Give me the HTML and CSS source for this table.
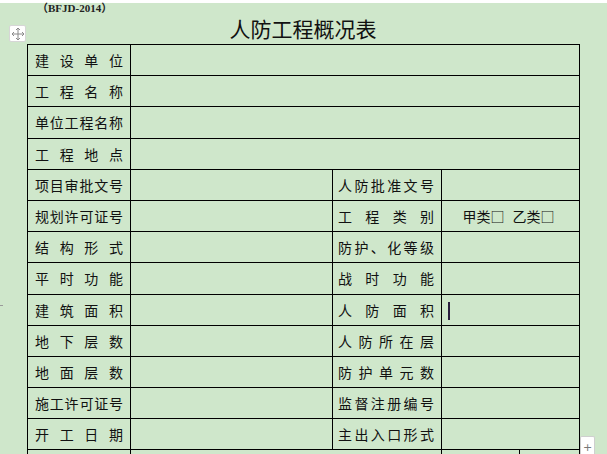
FILE: index.html
```html
<!DOCTYPE html>
<html lang="zh-CN">
<head>
<meta charset="utf-8">
<title>人防工程概况表</title>
<link rel="stylesheet" href="styles.css">
</head>
<body>
<div class="topstrip"></div>
<div class="code">（BFJD-2014）</div>
<div class="sheet">
  <h1 class="title">人防工程概况表</h1>
  <table class="form">
    <colgroup>
      <col class="c1"><col class="c2"><col class="c3"><col class="c4"><col class="c5">
    </colgroup>
    <tr><td class="lbl"><div class="dist"><span>建</span><span>设</span><span>单</span><span>位</span></div></td><td colspan="4"></td></tr>
    <tr><td class="lbl"><div class="dist"><span>工</span><span>程</span><span>名</span><span>称</span></div></td><td colspan="4"></td></tr>
    <tr><td class="lbl"><div class="dist"><span>单</span><span>位</span><span>工</span><span>程</span><span>名</span><span>称</span></div></td><td colspan="4"></td></tr>
    <tr><td class="lbl"><div class="dist"><span>工</span><span>程</span><span>地</span><span>点</span></div></td><td colspan="4"></td></tr>
    <tr><td class="lbl"><div class="dist"><span>项</span><span>目</span><span>审</span><span>批</span><span>文</span><span>号</span></div></td><td></td>
        <td class="lbl2"><div class="dist"><span>人</span><span>防</span><span>批</span><span>准</span><span>文</span><span>号</span></div></td><td colspan="2"></td></tr>
    <tr><td class="lbl"><div class="dist"><span>规</span><span>划</span><span>许</span><span>可</span><span>证</span><span>号</span></div></td><td></td>
        <td class="lbl2"><div class="dist"><span>工</span><span>程</span><span>类</span><span>别</span></div></td><td colspan="2" class="choice"><span>甲类□</span><span class="gap"></span><span>乙类□</span></td></tr>
    <tr><td class="lbl"><div class="dist"><span>结</span><span>构</span><span>形</span><span>式</span></div></td><td></td>
        <td class="lbl2"><div class="dist"><span>防</span><span>护</span><span>、</span><span>化</span><span>等</span><span>级</span></div></td><td colspan="2"></td></tr>
    <tr><td class="lbl"><div class="dist"><span>平</span><span>时</span><span>功</span><span>能</span></div></td><td></td>
        <td class="lbl2"><div class="dist"><span>战</span><span>时</span><span>功</span><span>能</span></div></td><td colspan="2"></td></tr>
    <tr><td class="lbl"><div class="dist"><span>建</span><span>筑</span><span>面</span><span>积</span></div></td><td></td>
        <td class="lbl2"><div class="dist"><span>人</span><span>防</span><span>面</span><span>积</span></div></td><td colspan="2" class="editing"><span class="caret"></span></td></tr>
    <tr><td class="lbl"><div class="dist"><span>地</span><span>下</span><span>层</span><span>数</span></div></td><td></td>
        <td class="lbl2"><div class="dist"><span>人</span><span>防</span><span>所</span><span>在</span><span>层</span></div></td><td colspan="2"></td></tr>
    <tr><td class="lbl"><div class="dist"><span>地</span><span>面</span><span>层</span><span>数</span></div></td><td></td>
        <td class="lbl2"><div class="dist"><span>防</span><span>护</span><span>单</span><span>元</span><span>数</span></div></td><td colspan="2"></td></tr>
    <tr><td class="lbl"><div class="dist"><span>施</span><span>工</span><span>许</span><span>可</span><span>证</span><span>号</span></div></td><td></td>
        <td class="lbl2"><div class="dist"><span>监</span><span>督</span><span>注</span><span>册</span><span>编</span><span>号</span></div></td><td colspan="2"></td></tr>
    <tr><td class="lbl"><div class="dist"><span>开</span><span>工</span><span>日</span><span>期</span></div></td><td></td>
        <td class="lbl2"><div class="dist"><span>主</span><span>出</span><span>入</span><span>口</span><span>形</span><span>式</span></div></td><td colspan="2"></td></tr>
    <tr><td></td><td colspan="2"></td><td></td><td></td></tr>
  </table>
</div>
<div class="move-handle">
  <svg width="14" height="14" viewBox="0 0 14 14" fill="none" stroke="#8a8a8a" stroke-width="1">
    <path d="M7 1v12M1 7h12"/>
    <path d="M5 3l2-2 2 2M5 11l2 2 2-2M3 5l-2 2 2 2M11 5l2 2-2 2"/>
  </svg>
</div>
<div class="add-handle">+</div>
<div class="left-tick"></div>
</body>
</html>
```
FILE: styles.css
```css
html, body {
  margin: 0;
  padding: 0;
}
body {
  width: 607px;
  height: 454px;
  overflow: hidden;
  background: #cfe7cb;
  font-family: "Noto Sans CJK SC", "Noto Sans", sans-serif;
  color: #111;
  position: relative;
}
.topstrip {
  height: 3px;
  background: #ffffff;
}
.code {
  height: 10px;
  line-height: 10px;
  padding-left: 37px;
  font-family: "Liberation Serif", "Noto Sans CJK SC", serif;
  font-weight: bold;
  font-size: 11px;
  color: #222;
}
.sheet {
  margin-left: 27px;
  width: 552px;
}
.title {
  margin: 0;
  height: 31px;
  line-height: 31px;
  text-align: center;
  font-size: 21px;
  font-weight: normal;
  color: #111;
}
.form {
  border-collapse: collapse;
  table-layout: fixed;
  width: 552px;
}
.c1 { width: 103px; }
.c2 { width: 202px; }
.c3 { width: 109px; }
.c4 { width: 78px; }
.c5 { width: 60px; }
.form tr {
  height: 31.2px;
}
.form td {
  border: 1px solid #000;
  padding: 0;
  font-size: 14px;
  line-height: 18px;
  vertical-align: middle;
}
.lbl {
  padding: 0 7px 0 7px !important;
}
.lbl2 {
  padding: 0 7px 0 5px !important;
}
.dist {
  display: flex;
  justify-content: space-between;
}
.choice {
  text-align: center;
  padding-right: 4px !important;
}
.gap {
  display: inline-block;
  width: 8px;
}
.editing {
  padding-left: 6px !important;
}
.caret {
  display: inline-block;
  width: 2px;
  height: 18px;
  background: #2b2040;
  vertical-align: middle;
}
.move-handle {
  position: absolute;
  left: 9px;
  top: 25px;
  width: 17px;
  height: 17px;
  background: #ffffff;
  border: 1px solid #d6d6d6;
  border-radius: 2px;
  box-sizing: border-box;
  display: flex;
  align-items: center;
  justify-content: center;
}
.add-handle {
  position: absolute;
  left: 580px;
  top: 436px;
  width: 15px;
  height: 18px;
  background: #ffffff;
  border: 1px solid #cfcfcf;
  border-bottom: none;
  border-radius: 2px 2px 0 0;
  box-sizing: border-box;
  color: #777;
  font-family: "DejaVu Sans", sans-serif;
  font-size: 11px;
  line-height: 11px;
  text-align: center;
  padding-top: 5px;
}
.left-tick {
  position: absolute;
  left: 0;
  top: 305px;
  width: 3px;
  height: 1px;
  background: #9a9a9a;
}
```
